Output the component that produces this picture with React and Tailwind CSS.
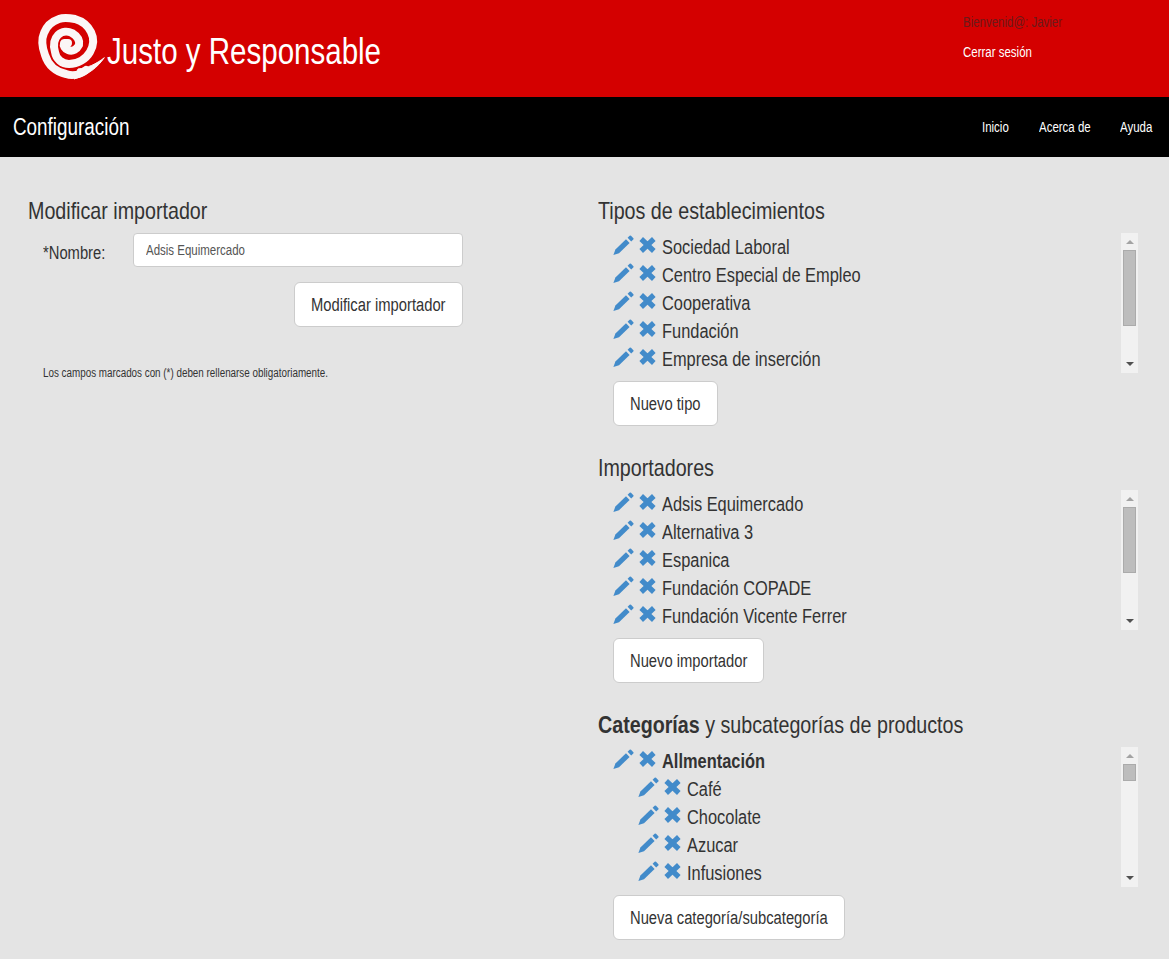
const font = { fontFamily: '"Liberation Sans", Arial, sans-serif' };

// the reference's font is about 18% narrower than Liberation Sans
function Narrow({ children }) {
  return <span className="inline-block origin-left scale-x-[0.82] whitespace-nowrap">{children}</span>;
}

function Pencil({ className }) {
  return (
    <svg viewBox="0 0 21 20" className={className} fill="#428bca">
      <path d="M0.4 20 L2.4 14.4 L13 4.2 L16.6 8 L6 18.2 Z" />
      <path d="M14.6 2.8 L16.6 0.8 Q17.4 0.2 18 0.8 L20.4 3.2 Q20.9 3.8 20.3 4.4 L18.2 6.4 Z" />
    </svg>
  );
}

function Cross({ className }) {
  return (
    <svg viewBox="0 0 17 16" className={className} fill="none" stroke="#428bca" strokeWidth="5.2">
      <path d="M2.2 2 L14.8 14 M14.8 2 L2.2 14" />
    </svg>
  );
}

function Logo() {
  return (
    <svg viewBox="0 0 80 76" className="w-[80px] h-[76px] shrink-0" fill="none" stroke="#fbf6f6" strokeLinecap="round" strokeLinejoin="round">
      <path
        d="M56 62 C50 67 42 68 36 66 C26 64 18 57 15 47 C12 39 11 32 14 25 C17 17 23 13 29 11 C34 9 40 10 45 11 C52 13 58 18 61 24 C64 30 64 37 60 44 C56 51 48 56 39 56 C32 56 26 51 25 44 C23 37 24 31 28 27 C32 23 38 23 42 25 C47 28 50 32 49 37 C47 41 43 44 38 42 C35 41 33 38 34 35 L38 35"
        strokeWidth="8"
      />
      <path d="M74 50 C68 59 58 67 44 71 L48 61 C58 60 66 56 74 50 Z" fill="#fbf6f6" strokeWidth="1" />
    </svg>
  );
}

function Row({ label, bold, sub }) {
  return (
    <div className={`flex items-start h-7 ${sub ? 'pl-[25px]' : ''}`}>
      <Pencil className="w-[21px] h-[20px] mt-[2px] shrink-0" />
      <Cross className="w-[17px] h-[16px] ml-[5px] mt-[4px] shrink-0" />
      <span className={`ml-[6px] text-[20px] leading-7 ${bold ? 'font-bold' : ''}`}>
        <Narrow>{label}</Narrow>
      </span>
    </div>
  );
}

function ScrollList({ items, thumb }) {
  return (
    <div className="relative h-[140px] overflow-hidden pl-[15px]">
      <div>
        {items.map((it) => (
          <Row key={it.label} {...it} />
        ))}
      </div>
      <div className="absolute right-[31px] top-0 w-[17px] h-[140px] bg-[#f1f1f1] flex flex-col items-center">
        <div className="mt-[7px] mb-[6px] w-0 h-0 border-x-[4px] border-x-transparent border-b-[4px] border-b-[#a3a3a3]" />
        <div className={`w-[13px] bg-[#bdbdbd] border border-[#ababab] ${thumb}`} />
        <div className="mt-auto mb-[7px] w-0 h-0 border-x-[4px] border-x-transparent border-t-[4px] border-t-[#505050]" />
      </div>
    </div>
  );
}

function Btn({ children, className }) {
  return (
    <button className={`h-[45px] pl-4 pt-[2px] text-left bg-white border border-[#cccccc] rounded-md text-[#333] text-[18px] ${className}`}>
      <Narrow>{children}</Narrow>
    </button>
  );
}

const tipos = ['Sociedad Laboral', 'Centro Especial de Empleo', 'Cooperativa', 'Fundación', 'Empresa de inserción'].map((label) => ({ label }));
const importadores = ['Adsis Equimercado', 'Alternativa 3', 'Espanica', 'Fundación COPADE', 'Fundación Vicente Ferrer'].map((label) => ({ label }));
const categorias = [
  { label: 'Allmentación', bold: true },
  { label: 'Café', sub: true },
  { label: 'Chocolate', sub: true },
  { label: 'Azucar', sub: true },
  { label: 'Infusiones', sub: true },
];

function Section({ title, items, thumb, button, buttonWidth }) {
  return (
    <section className="mb-[29px]">
      <h3 className="text-[24px] leading-[25px] font-normal mb-[10px]">
        <Narrow>{title}</Narrow>
      </h3>
      <ScrollList items={items} thumb={thumb} />
      <div className="pl-[15px] mt-[8px]">
        <Btn className={buttonWidth}>{button}</Btn>
      </div>
    </section>
  );
}

export default function App() {
  return (
    <div style={font} className="h-[959px] overflow-hidden bg-[#e4e4e4] text-[#333]">
      <header className="h-[97px] bg-[#d40000] flex">
        <div className="flex items-start pl-[30px] pt-[8px] w-[963px]">
          <Logo />
          <span className="text-white text-[36px] leading-[38px] mt-[25px] -ml-[3px]">
            <Narrow>Justo y Responsable</Narrow>
          </span>
        </div>
        <div className="pt-[14px] text-[14px] leading-[16px]">
          <p className="text-[#6b1a1a]"><Narrow>Bienvenid@: Javier</Narrow></p>
          <a className="block text-white mt-[14px]"><Narrow>Cerrar sesión</Narrow></a>
        </div>
      </header>

      <nav className="h-[60px] bg-black flex items-center justify-between pl-[13px] pr-[16px] text-white">
        <span className="text-[23px]"><Narrow>Configuración</Narrow></span>
        <div className="flex gap-[30px] text-[14px]">
          <a className="w-[27px]"><Narrow>Inicio</Narrow></a>
          <a className="w-[51px]"><Narrow>Acerca de</Narrow></a>
          <a className="w-[33px]"><Narrow>Ayuda</Narrow></a>
        </div>
      </nav>

      <main className="flex pt-[41px]">
        <div className="w-[598px] pl-[28px]">
          <h3 className="text-[24px] leading-[25px] font-normal">
            <Narrow>Modificar importador</Narrow>
          </h3>
          <div className="w-[435px] mt-[10px]">
            <div className="flex items-center">
              <label className="w-[105px] pl-[15px] text-[18px] mt-[6px]"><Narrow>*Nombre:</Narrow></label>
              <div className="w-[330px] h-[34px] px-3 bg-white border border-[#cccccc] rounded text-[14px] leading-[33px] text-[#555]">
                <Narrow>Adsis Equimercado</Narrow>
              </div>
            </div>
            <div className="flex justify-end mt-[15px]">
              <Btn className="w-[169px]">Modificar importador</Btn>
            </div>
          </div>
          <p className="mt-[39px] pl-[15px] text-[12px] leading-[14px]">
            <Narrow>Los campos marcados con (*) deben rellenarse obligatoriamente.</Narrow>
          </p>
        </div>

        <div className="flex-1">
          <Section title="Tipos de establecimientos" items={tipos} thumb="h-[76px]" button="Nuevo tipo" buttonWidth="w-[105px]" />
          <Section title="Importadores" items={importadores} thumb="h-[66px]" button="Nuevo importador" buttonWidth="w-[151px]" />
          <Section
            title={<><b>Categorías</b> y subcategorías de productos</>}
            items={categorias}
            thumb="h-[17px]"
            button="Nueva categoría/subcategoría"
            buttonWidth="w-[232px]"
          />
        </div>
      </main>
    </div>
  );
}
